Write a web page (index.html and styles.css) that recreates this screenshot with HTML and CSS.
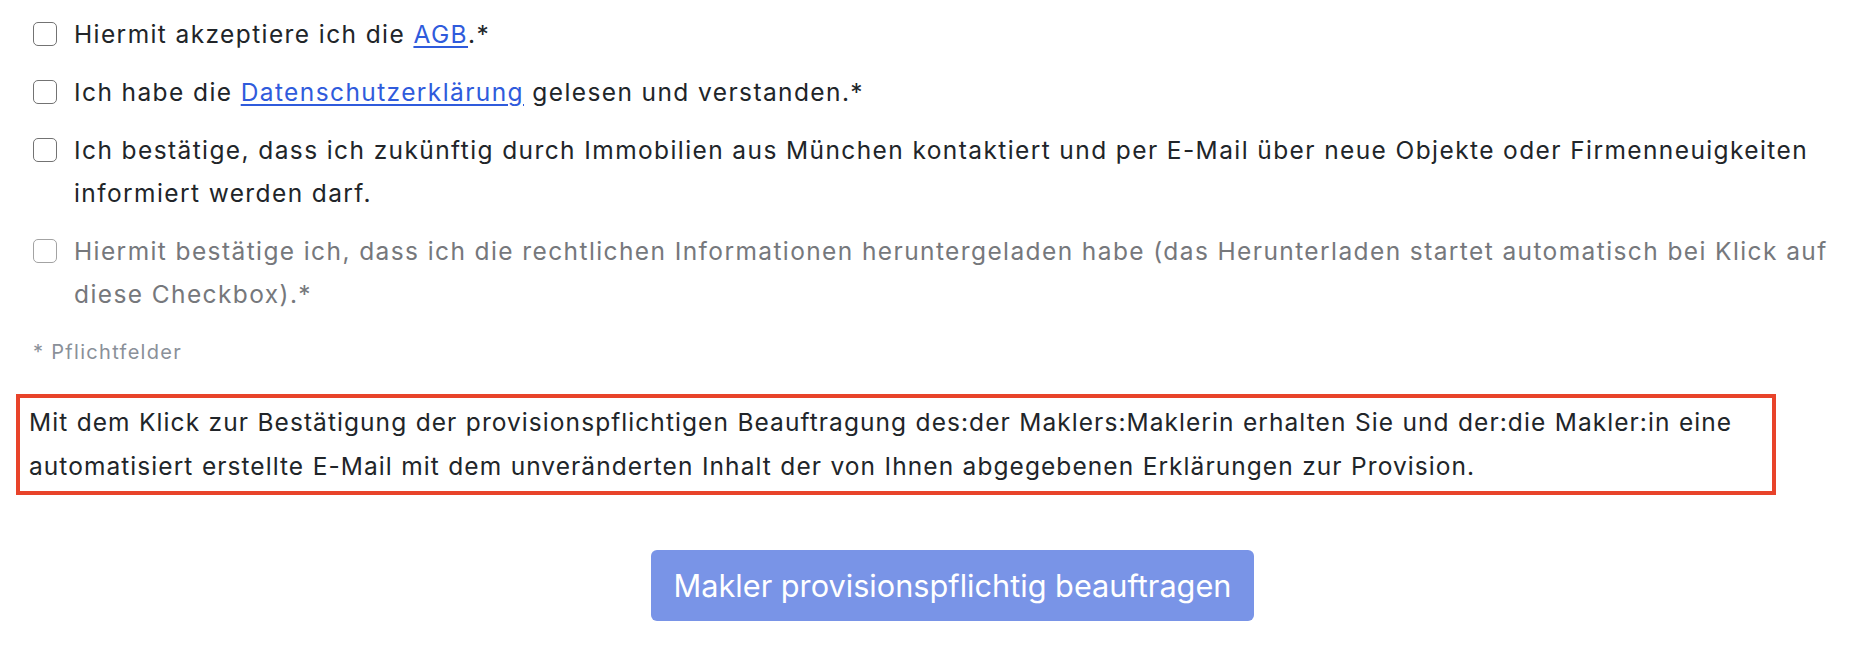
FILE: index.html
```html
<!DOCTYPE html>
<html lang="de">
<head>
<meta charset="utf-8">
<link rel="stylesheet" href="styles.css">
</head>
<body>
<div class="page">
  <div class="checks">
    <label class="check">
      <input type="checkbox" class="box">
      <span class="label">Hiermit akzeptiere ich die <a href="#">AGB</a>.*</span>
    </label>
    <label class="check">
      <input type="checkbox" class="box">
      <span class="label">Ich habe die <a href="#">Datenschutzerklärung</a> gelesen und verstanden.*</span>
    </label>
    <label class="check">
      <input type="checkbox" class="box">
      <span class="label">Ich bestätige, dass ich zukünftig durch Immobilien aus München kontaktiert und per E-Mail über neue Objekte oder Firmenneuigkeiten informiert werden darf.</span>
    </label>
    <label class="check disabled">
      <input type="checkbox" class="box" disabled>
      <span class="label">Hiermit bestätige ich, dass ich die rechtlichen Informationen heruntergeladen habe (das Herunterladen startet automatisch bei Klick auf diese Checkbox).*</span>
    </label>
    <p class="required">* Pflichtfelder</p>
  </div>
  <div class="notice">Mit dem Klick zur Bestätigung der provisionspflichtigen Beauftragung des:der Maklers:Maklerin erhalten Sie und der:die Makler:in eine automatisiert erstellte E-Mail mit dem unveränderten Inhalt der von Ihnen abgegebenen Erklärungen zur Provision.</div>
  <div class="actions">
    <button class="submit" type="button">Makler provisionspflichtig beauftragen</button>
  </div>
</div>
</body>
</html>
```
FILE: styles.css
```css
html, body {
  margin: 0;
  padding: 0;
  background: #ffffff;
}
body {
  font-family: "Inter", "Noto Sans", sans-serif;
  color: #212529;
  font-size: 24px;
}
.page {
  padding: 0 0 0 16px;
}
.checks {
  padding: 13px 0 0 17px;
  display: flex;
  flex-direction: column;
  gap: 15px;
}
.check {
  display: flex;
  align-items: flex-start;
  gap: 17px;
  line-height: 43px;
  font-size: 24.5px;
  letter-spacing: 1.4px;
}
.box {
  appearance: none;
  -webkit-appearance: none;
  flex: none;
  width: 24px;
  height: 24px;
  margin: 9px 0 0 0;
  border: 1.5px solid #737373;
  border-radius: 5px;
  background: #fff;
}
.label a {
  color: #2f5bdc;
  text-decoration: underline;
  text-underline-offset: 3px;
  text-decoration-thickness: 1.5px;
}
.check.disabled .label {
  color: #76787c;
}
.check.disabled .box {
  border-color: #a3a3a3;
}
.required {
  margin: 0;
  padding-top: 8px;
  font-size: 20px;
  letter-spacing: 1.3px;
  line-height: 27px;
  color: #8a9099;
}
.notice {
  margin-top: 28px;
  width: fit-content;
  max-width: 1734px;
  border: 4.5px solid #e8432a;
  padding: 3px 9px 3.2px 9px;
  line-height: 43.5px;
  font-size: 24.5px;
  letter-spacing: 1.06px;
  word-spacing: 0.5px;
  color: #212529;
}
.actions {
  display: flex;
  justify-content: center;
  padding-left: 37px;
  margin-top: 55px;
}
.submit {
  font-family: "Inter", "Noto Sans", sans-serif;
  font-size: 30.7px;
  line-height: 47px;
  padding: 12px 23px;
  color: #ffffff;
  background: #7994e7;
  border: none;
  border-radius: 6px;
}
```
